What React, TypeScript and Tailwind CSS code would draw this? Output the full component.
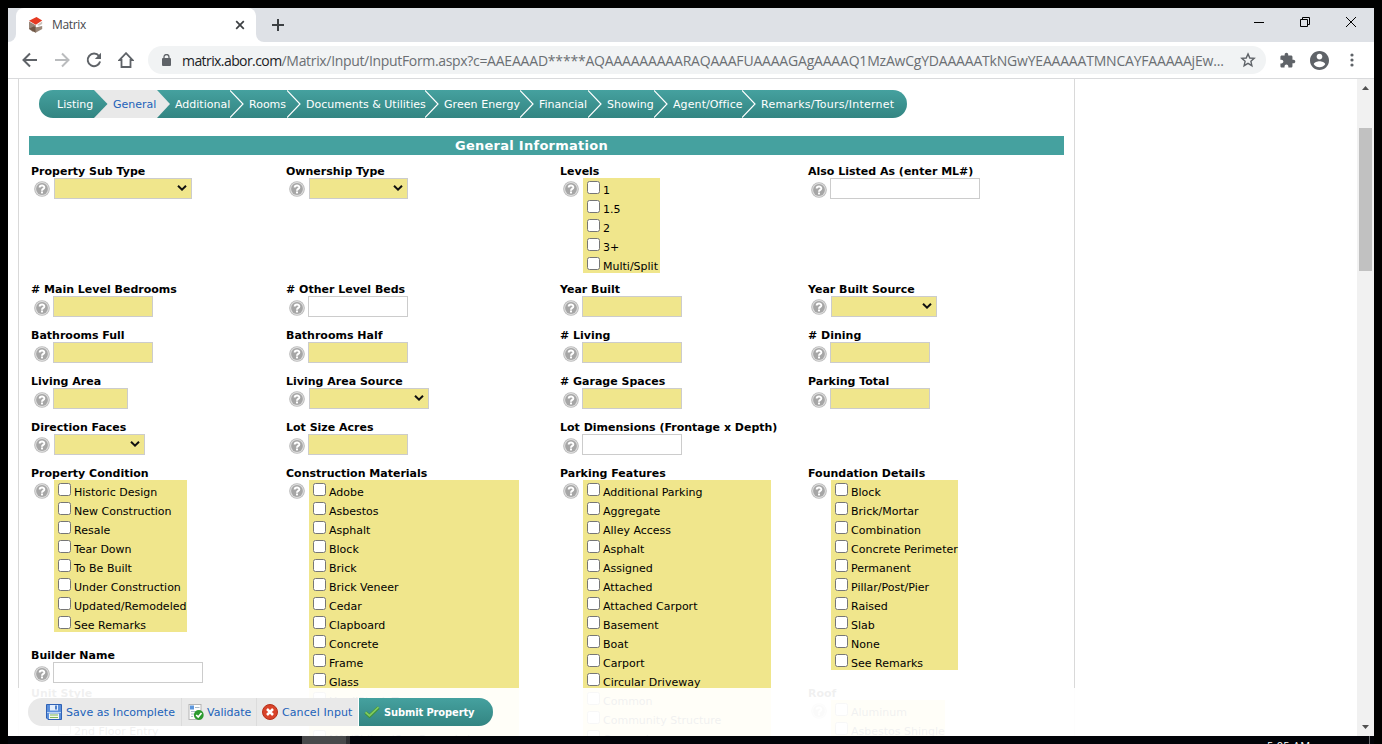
import React from "react";

const NAV: { t: string; w: string; active?: boolean }[] = [
  { t: "Listing", w: "w-[55px] pl-[18px]" },
  { t: "General", w: "w-[63px] pl-[19px]", active: true },
  { t: "Additional", w: "w-[73px] pl-[18px]" },
  { t: "Rooms", w: "w-[57px] pl-[19px]" },
  { t: "Documents & Utilities", w: "w-[138px] pl-[19px]" },
  { t: "Green Energy", w: "w-[95px] pl-[19px] tracking-[0.06px]" },
  { t: "Financial", w: "w-[68px] pl-[19px]" },
  { t: "Showing", w: "w-[66px] pl-[19px]" },
  { t: "Agent/Office", w: "w-[88px] pl-[19px] tracking-[0.1px]" },
  { t: "Remarks/Tours/Internet", w: "w-[165px] pl-[19px] tracking-[0.25px]" },
];

function Help({ low = false }: { low?: boolean }) {
  return (
    <svg className={low ? "ml-[3px] mt-[4px] block size-4 shrink-0" : "ml-[3px] mt-[3px] block size-4 shrink-0"} viewBox="0 0 16 16">
      <circle cx="8" cy="8" r="7.8" fill="#b9b9b9" />
      <circle cx="8" cy="8" r="6.9" fill="#dedede" />
      <circle cx="8" cy="8" r="5.9" fill="#a6a6a6" />
      <path d="M5.7 6.5C5.7 3.700 10.400 3.800 10.300 6.400C10.200 7.900 8 7.800 8 9.700" fill="none" stroke="#fff" strokeWidth="2" />
      <rect x="7" y="10.500" width="2" height="1.900" fill="#fff" />
    </svg>
  );
}

function Label({ children }: { children: React.ReactNode }) {
  return <div className="h-[14px] whitespace-nowrap text-[11px] font-bold leading-[16px]">{children}</div>;
}

function Input({ label, w, plain = false }: { label: string; w: string; plain?: boolean }) {
  return (
    <div>
      <Label>{label}</Label>
      <div className="flex">
        <Help low />
        <div className={`ml-[3px] h-[21px] border border-[#ccc] ${w} ${plain ? "bg-white" : "bg-[#f0e68c]"}`} />
      </div>
    </div>
  );
}

function Select({ label, w }: { label: string; w: string }) {
  return (
    <div>
      <Label>{label}</Label>
      <div className="flex">
        <Help />
        <div className={`ml-[4px] flex h-[21px] items-center justify-end border border-[#ccc] bg-[#f0e68c] pb-px pr-[4px] ${w}`}>
          <svg className="block h-[6px] w-[10px]" viewBox="0 0 10 6">
            <path d="M1 0.8L5 4.6L9 0.8" fill="none" stroke="#101010" strokeWidth="2" />
          </svg>
        </div>
      </div>
    </div>
  );
}

function Checks({ label, items, w }: { label: string; items: string[]; w: string }) {
  return (
    <div>
      <Label>{label}</Label>
      <div className="flex">
        <Help />
        <div className={`ml-[4px] ${w}`}>
          {items.map((t) => (
            <div key={t} className="flex h-[19px] whitespace-nowrap pl-[4px]">
              <span className="mt-[3px] size-[13px] shrink-0 rounded-[2.5px] border border-[#767676] bg-white" />
              <span className="ml-[3px] pt-[6px] text-[11px] leading-[14px]">{t}</span>
            </div>
          ))}
        </div>
      </div>
    </div>
  );
}

function Row({ h, children }: { h: string; children: React.ReactNode }) {
  return <div className={`grid grid-cols-[255px_274px_248px_256px] ${h}`}>{children}</div>;
}

function TabStrip() {
  return (
    <div className="flex h-[34px] bg-[#dee1e6]">
      <div className="flex w-2 bg-white">
        <div className="w-2 rounded-br-lg bg-[#dee1e6]" />
      </div>
      <div className="flex w-[240px] items-center rounded-t-lg bg-white">
        <svg className="ml-[12px] h-4 w-4" viewBox="0 0 16 16">
          <path d="M1 3.800L8.500 0L14.200 3.600L7.800 7.800Z" fill="#e63a22" />
          <path d="M1 4.600L7.800 8.200L8 12L5 15L1 12Z" fill="#988578" />
          <path d="M1 11.800L6 9.200L11 12.500L7.500 15.800Z" fill="#6f5645" />
          <path d="M7.500 10.500L14.200 9L14.200 12L7.500 15.800Z" fill="#9a8778" />
          <path d="M9 8L14.200 4.600V7L11 8.800Z" fill="#c9c0b9" />
        </svg>
        <span className="ml-[8px] font-['Open_Sans',sans-serif] text-[12px] tracking-[-0.35px] text-[#45484c]">Matrix</span>
        <svg className="ml-auto mr-[11px] size-[10px]" viewBox="0 0 10 10">
          <path d="M1.2 1.2L8.8 8.8M8.8 1.2L1.2 8.8" stroke="#3c4043" strokeWidth="1.7" />
        </svg>
      </div>
      <div className="flex w-2 bg-white">
        <div className="w-2 rounded-bl-lg bg-[#dee1e6]" />
      </div>
      <svg className="ml-[8px] mt-[11px] size-3" viewBox="0 0 12 12">
        <path d="M6 0V12M0 6H12" stroke="#3c4043" strokeWidth="2" />
      </svg>
      <div className="ml-auto mr-[18px] mt-[9px] flex gap-[36px]">
        <svg className="size-[10px]" viewBox="0 0 10 10"><path d="M0 5.5H10" stroke="#000" /></svg>
        <svg className="size-[10px]" viewBox="0 0 10 10"><path d="M.5 2.5H7.5V9.5H.5ZM2.5 2.5V.5H9.5V7.5H7.5" fill="none" stroke="#000" /></svg>
        <svg className="size-[10px]" viewBox="0 0 10 10"><path d="M0 0L10 10M10 0L0 10" stroke="#000" /></svg>
      </div>
    </div>
  );
}

function Toolbar() {
  return (
    <div className="flex h-[37px] items-center border-b border-[#d9dadc] bg-white">
      <svg className="ml-[14px] size-4" viewBox="0 0 16 16"><path d="M15 8H2M8 1.5L1.5 8L8 14.5" fill="none" stroke="#5f6368" strokeWidth="2" /></svg>
      <svg className="ml-[16px] size-4" viewBox="0 0 16 16"><path d="M1 8H14M8 1.5L14.5 8L8 14.5" fill="none" stroke="#babcbe" strokeWidth="2" /></svg>
      <svg className="ml-[16px] size-4" viewBox="0 0 16 16">
        <path d="M13 4A6.3 6.3 0 1 0 14.1 9.6" fill="none" stroke="#5f6368" strokeWidth="2" />
        <path d="M15 .8V7H8.8Z" fill="#5f6368" />
      </svg>
      <svg className="ml-[16px] size-4" viewBox="0 0 16 16"><path d="M8 1.2L14.6 8H12.5V15H3.5V8H1.4Z" fill="none" stroke="#5f6368" strokeWidth="1.8" /></svg>
      <div className="ml-[14px] flex h-7 w-[1118px] items-center rounded-full bg-[#f1f3f4]">
        <svg className="ml-[14px] h-[12px] w-[9px]" viewBox="0 0 9 12">
          <path d="M2 5V3A2.5 2.5 0 0 1 7 3V5" fill="none" stroke="#5f6368" strokeWidth="1.3" />
          <rect x="0" y="4" width="9" height="8" rx="1" fill="#5f6368" />
        </svg>
        <span className="ml-[11px] w-[1046px] whitespace-nowrap font-['Open_Sans',sans-serif] text-[14px] text-[#6b6f73]">
          <span className="tracking-[-0.58px] text-[#202124]">matrix.abor.com</span>
          <span className="tracking-[-0.33px]">/Matrix/Input/InputForm.aspx?c=</span>
          <span className="tracking-[-0.2px]">AAEAAAD*****AQAAAAAAAAARAQAAAFUAAAAGAgAAAAQ1MzAwCgYDAAAAATkNGwYEAAAAATMNCAYFAAAAAjEw...</span>
        </span>
        <svg className="ml-[12px] size-4" viewBox="0 0 16 16"><path d="M8 1.9L9.8 6L14.2 6.4L10.9 9.3L11.9 13.7L8 11.4L4.1 13.7L5.1 9.3L1.8 6.4L6.2 6Z" fill="none" stroke="#5f6368" strokeWidth="1.4" /></svg>
      </div>
      <svg className="ml-[13px] size-[17px]" viewBox="0 0 24 24">
        <path d="M20.5 11H19V7c0-1.1-.9-2-2-2h-4V3.5C13 2.1 11.900 1 10.500 1S8 2.100 8 3.500V5H4c-1.100 0-2 .9-2 2v3.800h1.500c1.500 0 2.700 1.200 2.700 2.700S5 16.200 3.500 16.200H2V20c0 1.100.9 2 2 2h3.800v-1.500c0-1.500 1.200-2.700 2.700-2.700s2.700 1.200 2.700 2.700V22H17c1.100 0 2-.9 2-2v-4h1.500c1.400 0 2.500-1.100 2.500-2.500S21.900 11 20.500 11z" fill="#5f6368" />
      </svg>
      <svg className="ml-[14px] size-[19px]" viewBox="2 2 20 20">
        <path d="M12 2C6.480 2 2 6.480 2 12s4.480 10 10 10 10-4.480 10-10S17.520 2 12 2zm0 3c1.660 0 3 1.340 3 3s-1.340 3-3 3-3-1.340-3-3 1.340-3 3-3zm0 14.200c-2.500 0-4.710-1.280-6-3.220.03-1.990 4-3.080 6-3.080 1.990 0 5.970 1.090 6 3.080-1.290 1.940-3.500 3.220-6 3.220z" fill="#5f6368" />
      </svg>
      <svg className="ml-[21px] h-[14px] w-1" viewBox="0 0 4 14">
        <circle cx="2" cy="2" r="1.6" fill="#5f6368" /><circle cx="2" cy="7" r="1.6" fill="#5f6368" /><circle cx="2" cy="12" r="1.6" fill="#5f6368" />
      </svg>
    </div>
  );
}

function WizardNav() {
  return (
    <div className="ml-[20px] mt-[11px] flex h-7 w-[868px] overflow-hidden rounded-full bg-gradient-to-b from-[#45a19f] to-[#338582] text-[11px] leading-[30px] text-white">
      {NAV.map((n, i) => (
        <div key={n.t} className={`relative shrink-0 whitespace-nowrap ${n.w} ${n.active ? "bg-[#e9e9e9] text-[#1c62b9]" : ""}`}>
          {i > 0 && (
            <svg className="absolute left-0 top-0 h-7 w-[14px]" viewBox="0 0 14 28">
              <defs>
                <linearGradient id="teal" x1="0" y1="0" x2="0" y2="1">
                  <stop offset="0" stopColor="#45a19f" />
                  <stop offset="1" stopColor="#338582" />
                </linearGradient>
              </defs>
              {i === 1 && <path d="M0 0L13.500 14L0 28Z" fill="url(#teal)" />}
              {i === 2 && <path d="M0 0L13 14L0 28Z" fill="#e9e9e9" />}
              {i > 2 && <path d="M0 .5L13 14L0 27.500" fill="none" stroke="#fff" strokeWidth="1.200" />}
            </svg>
          )}
          {n.t}
        </div>
      ))}
    </div>
  );
}

function Footer() {
  return (
    <div className="absolute bottom-0 left-0 flex h-12 w-[1349px] bg-white/[0.94] pl-[20px] pt-[10px] text-[11px] leading-[14px] text-[#1c62b9]">
      <div className="flex h-7 w-[465px] overflow-hidden whitespace-nowrap rounded-full bg-[#e9e9e9]">
        <div className="flex w-[153px] items-center pl-[18px]">
          <svg className="mr-[4px] size-4" viewBox="0 0 16 16">
            <path d="M.5.5H15.500V15.500H2L.5 14Z" fill="#5a8fdc" stroke="#2f61b5" />
            <rect x="4" y="1" width="8" height="5.500" fill="#e4eefb" />
            <rect x="9" y="1.500" width="2" height="4" fill="#4d7fca" />
            <path d="M1 8.500H15" stroke="#b9d2f3" />
            <rect x="3" y="9.500" width="10" height="5.500" fill="#f4f8ee" />
            <path d="M4 11H12M4 13.500H12" stroke="#7fb75a" />
          </svg>
          <span className="pt-[2px] tracking-[0.05px]">Save as Incomplete</span>
        </div>
        <div className="flex w-[75px] items-center border-l border-[#dcdcdc] pl-[6px]">
          <svg className="mr-[3px] size-4" viewBox="0 0 16 16">
            <rect x="1" y=".5" width="12" height="15" fill="#fff" stroke="#b5b5b5" />
            <rect x="2" y="1.500" width="4" height="4" fill="#5c96dc" />
            <path d="M7 3.500H11.500M3 7.500H10M3 10H6M3 12.500H5" stroke="#a9b9c8" />
            <circle cx="10.800" cy="11" r="4.900" fill="#2c9a2f" />
            <path d="M8.200 11L10.200 13L13.500 9" fill="none" stroke="#fff" strokeWidth="1.700" />
          </svg>
          <span className="pt-[2px]">Validate</span>
        </div>
        <div className="flex w-[103px] items-center border-l border-r border-l-[#dcdcdc] border-r-white pl-[5px]">
          <svg className="mr-[4px] size-4" viewBox="0 0 16 16">
            <circle cx="8" cy="8" r="7.500" fill="#d8432a" stroke="#b5301a" />
            <path d="M5 5L11 11M11 5L5 11" stroke="#fff" strokeWidth="2.500" />
          </svg>
          <span className="pt-[2px] tracking-[0.1px]">Cancel Input</span>
        </div>
        <div className="flex flex-1 items-center bg-gradient-to-b from-[#45a19f] to-[#338582] pl-[5px] font-bold text-white">
          <svg className="mr-[4px] size-4" viewBox="0 0 16 16">
            <path d="M1.500 8.500L5.500 12L14.500 3.500" fill="none" stroke="#3f8f35" strokeWidth="3.200" />
            <path d="M1.500 8.200L5.500 11.700L14.500 3.200" fill="none" stroke="#7fca5f" strokeWidth="1.800" />
          </svg>
          <span className="pt-[2px] font-['DejaVu_Sans_Condensed','DejaVu_Sans',sans-serif] tracking-[-0.1px] [font-stretch:condensed]">Submit Property</span>
        </div>
      </div>
    </div>
  );
}

function Scrollbar() {
  return (
    <div className="flex w-[17px] shrink-0 flex-col items-center justify-between bg-[#f1f1f1]">
      <div className="flex flex-col items-center">
        <svg className="mt-[7px] h-[4px] w-[7px]" viewBox="0 0 7 4"><path d="M0 4L3.500 0L7 4Z" fill="#505050" /></svg>
        <div className="mt-[38px] h-[143px] w-[13px] bg-[#c1c1c1]" />
      </div>
      <svg className="mb-[7px] h-[4px] w-[7px]" viewBox="0 0 7 4"><path d="M0 0L3.500 4L7 0Z" fill="#505050" /></svg>
    </div>
  );
}

export default function App() {
  return (
    <div className="flex h-[744px] w-[1382px] flex-col overflow-hidden bg-black px-2 pt-2 font-['Verdana','DejaVu_Sans',sans-serif] text-black">
      <TabStrip />
      <Toolbar />
      <div className="flex h-[657px] shrink-0 bg-white">
        <div className="relative flex-1 overflow-hidden">
          <div className="ml-[10px] h-full w-[1057px] overflow-hidden border-x border-[#d9d9d9]">
            <WizardNav />
            <div className="ml-[10px] mt-[18px] h-[19px] w-[1035px] bg-[#45a19f] pr-[30px] text-center text-[13px] font-bold leading-[19px] tracking-[0.27px] text-white">
              General Information
            </div>
            <div className="ml-[12px] mt-[9px]">
              <Row h="h-[118px]">
                <Select label="Property Sub Type" w="w-[138px]" />
                <Select label="Ownership Type" w="w-[99px]" />
                <Checks label="Levels" w="w-[77px] bg-[#f0e68c]" items={["1", "1.5", "2", "3+", "Multi/Split"]} />
                <Input label="Also Listed As (enter ML#)" w="w-[150px]" plain />
              </Row>
              <Row h="h-[46px]">
                <Input label="# Main Level Bedrooms" w="w-[100px]" />
                <Input label="# Other Level Beds" w="w-[100px]" plain />
                <Input label="Year Built" w="w-[100px]" />
                <Select label="Year Built Source" w="w-[106px]" />
              </Row>
              <Row h="h-[46px]">
                <Input label="Bathrooms Full" w="w-[100px]" />
                <Input label="Bathrooms Half" w="w-[100px]" />
                <Input label="# Living" w="w-[100px]" />
                <Input label="# Dining" w="w-[100px]" />
              </Row>
              <Row h="h-[46px]">
                <Input label="Living Area" w="w-[75px]" />
                <Select label="Living Area Source" w="w-[120px]" />
                <Input label="# Garage Spaces" w="w-[100px]" />
                <Input label="Parking Total" w="w-[100px]" />
              </Row>
              <Row h="h-[46px]">
                <Select label="Direction Faces" w="w-[91px]" />
                <Input label="Lot Size Acres" w="w-[100px]" />
                <Input label="Lot Dimensions (Frontage x Depth)" w="w-[100px]" plain />
              </Row>
              <Row h="h-[300px]">
                <div>
                  <div className="h-[182px]">
                    <Checks label="Property Condition" w="w-[133px] bg-[#f0e68c]" items={["Historic Design", "New Construction", "Resale", "Tear Down", "To Be Built", "Under Construction", "Updated/Remodeled", "See Remarks"]} />
                  </div>
                  <div className="h-[38px]">
                    <Input label="Builder Name" w="w-[150px]" plain />
                  </div>
                  <Checks label="Unit Style" w="w-[133px]" items={["", "2nd Floor Entry"]} />
                </div>
                <Checks label="Construction Materials" w="w-[210px] bg-[#f0e68c]" items={["Adobe", "Asbestos", "Asphalt", "Block", "Brick", "Brick Veneer", "Cedar", "Clapboard", "Concrete", "Frame", "Glass", "HardiPlank Type", "", "Mfd/Siding (See Remarks)"]} />
                <Checks label="Parking Features" w="w-[188px] bg-[#f0e68c]" items={["Additional Parking", "Aggregate", "Alley Access", "Asphalt", "Assigned", "Attached", "Attached Carport", "Basement", "Boat", "Carport", "Circular Driveway", "Common", "Community Structure", "Covered"]} />
                <div>
                  <div className="h-[220px]">
                    <Checks label="Foundation Details" w="w-[127px] bg-[#f0e68c]" items={["Block", "Brick/Mortar", "Combination", "Concrete Perimeter", "Permanent", "Pillar/Post/Pier", "Raised", "Slab", "None", "See Remarks"]} />
                  </div>
                  <Checks label="Roof" w="w-[114px] bg-[#f0e68c]" items={["Aluminum", "Asbestos Shingle"]} />
                </div>
              </Row>
            </div>
          </div>
          <Footer />
        </div>
        <Scrollbar />
      </div>
      <div className="flex h-2 shrink-0 overflow-hidden bg-[#020308]">
        <div className="ml-[294px] h-2 w-[44px] bg-[#48494b]" />
        <div className="h-2 w-[4px] bg-[#2d2e31]" />
        <span className="ml-[917px] mt-[3px] whitespace-nowrap font-['Open_Sans',sans-serif] text-[11px] leading-[13px] tracking-[0.3px] text-white">5:05 AM</span>
        <div className="ml-auto mr-[4px] h-2 w-px bg-[#66686c]" />
      </div>
    </div>
  );
}
